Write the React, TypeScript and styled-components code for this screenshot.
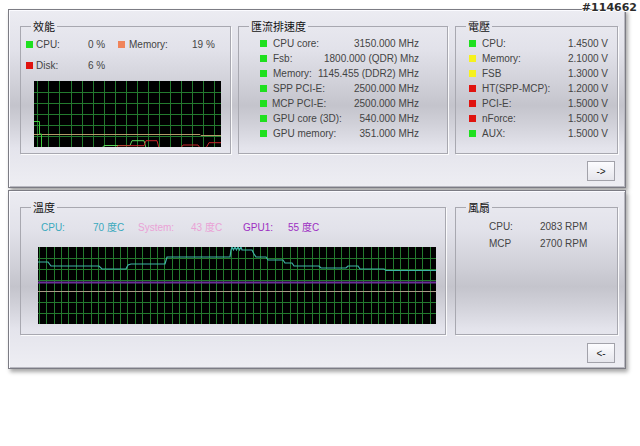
import React from "react";
import styled, { createGlobalStyle } from "styled-components";

const GlobalStyle = createGlobalStyle`
  html, body {
    margin: 0;
    padding: 0;
    background: #fff;
  }
  body {
    font-family: "Liberation Sans", Arial, sans-serif;
    font-size: 10px;
    color: #444;
  }
`;

const Page = styled.div`
  position: relative;
  width: 640px;
  height: 446px;
  padding: 9px 0 0 8px;
  box-sizing: border-box;
`;

const Watermark = styled.div`
  position: absolute;
  top: 2px;
  right: 3px;
  font: bold 11px/12px "DejaVu Sans", sans-serif;
  color: #2c2c2c;
  text-shadow: 1px 0 0 #fff, -1px 0 0 #fff, 0 1px 0 #fff, 0 -1px 0 #fff;
  z-index: 2;
`;

const Stack = styled.div`
  display: flex;
  flex-direction: column;
  gap: 2px;
  width: 618px;
`;

const Panel = styled.section`
  height: 179px;
  box-sizing: border-box;
  border: 1px solid #7c7c84;
  box-shadow: inset 1px 1px 0 #fbfbff, inset -1px -1px 0 #b8b8c0,
    2px 3px 4px rgba(0, 0, 0, 0.35);
  background: linear-gradient(
    to bottom,
    #ececf2 0%,
    #e2e2ea 22%,
    #d0d0d8 42%,
    #c4c4cc 54%,
    #d0d0d8 64%,
    #e4e4ec 78%,
    #eeeef3 100%
  );
  padding: 10px 7px 0 11px;
  display: flex;
  flex-direction: column;
`;

const BoxRow = styled.div<{ $gap: number; $h: number }>`
  display: flex;
  gap: ${(p) => p.$gap}px;
  height: ${(p) => p.$h}px;
`;

const Group = styled.fieldset<{ $w: number }>`
  margin: 0;
  padding: 0;
  min-width: 0;
  width: ${(p) => p.$w}px;
  box-sizing: border-box;
  border: 1px solid #a8a8b0;
  box-shadow: 1px 1px 0 rgba(255, 255, 255, 0.85);
`;

const Legend = styled.legend`
  margin-left: 10px;
  padding: 0 2px;
  font: 11px/13px "Noto Sans CJK TC", sans-serif;
  color: #111;
`;

const Content = styled.div<{ $pt: number; $pl: number; $pr?: number }>`
  padding: ${(p) => p.$pt}px ${(p) => p.$pr ?? 0}px 0 ${(p) => p.$pl}px;
`;

const StatRow = styled.div`
  display: flex;
  align-items: center;
  height: 21px;
`;

const Stat = styled.div`
  display: flex;
  align-items: center;
`;

const Swatch = styled.span<{ $c: string }>`
  display: inline-block;
  width: 7px;
  height: 7px;
  background: ${(p) => p.$c};
  flex: none;
`;

const Label = styled.span<{ $w?: number; $ml?: number }>`
  display: inline-block;
  width: ${(p) => (p.$w ? `${p.$w}px` : "auto")};
  margin-left: ${(p) => p.$ml ?? 0}px;
  white-space: nowrap;
`;

const ListRow = styled.div`
  display: flex;
  align-items: center;
  height: 15px;
  white-space: nowrap;
`;

const ListLabel = styled.span<{ $ml: number }>`
  flex: 1;
  margin-left: ${(p) => p.$ml}px;
`;

const ListValue = styled.span`
  text-align: right;
`;

const Graph = styled.svg<{ $mt: number; $ml: number }>`
  display: block;
  margin: ${(p) => p.$mt}px 0 0 ${(p) => p.$ml}px;
  background: #000;
`;

const TempRow = styled.div`
  display: grid;
  grid-template-columns: 52px 45px 53px 52px 45px auto;
  line-height: 14px;
  font-family: "Liberation Sans", "Noto Sans CJK TC", sans-serif;
`;

const TempText = styled.span<{ $c: string }>`
  color: ${(p) => p.$c};
  white-space: nowrap;
`;

const FanRow = styled.div`
  display: flex;
  align-items: center;
  height: 17px;
`;

const ButtonBar = styled.div<{ $mt: number }>`
  display: flex;
  justify-content: flex-end;
  margin-top: ${(p) => p.$mt}px;
  padding-right: 3px;
`;

const NavButton = styled.button`
  width: 28px;
  height: 20px;
  padding: 0;
  box-sizing: border-box;
  border: 1px solid #a2a2aa;
  background: linear-gradient(to bottom, #fcfcff, #e6e6ec);
  font: 10px "Liberation Sans", Arial, sans-serif;
  color: #222;
`;

type GridProps = {
  w: number;
  h: number;
  colW: number;
  x0: number;
  rowH: number;
  children?: React.ReactNode;
  mt: number;
  ml: number;
};

const GRID = "#237a2e";

const Chart = ({ w, h, colW, x0, rowH, children, mt, ml }: GridProps) => {
  const cols: number[] = [];
  for (let x = x0; x < w; x += colW) cols.push(Math.round(x) + 0.5);
  const rows: number[] = [];
  for (let y = rowH; y < h; y += rowH) rows.push(Math.round(y) + 0.5);
  return (
    <Graph width={w} height={h} viewBox={`0 0 ${w} ${h}`} $mt={mt} $ml={ml}>
      {cols.map((x) => (
        <line key={`c${x}`} x1={x} x2={x} y1={0} y2={h} stroke={GRID} strokeWidth={1} />
      ))}
      {rows.map((y) => (
        <line key={`r${y}`} x1={0} x2={w} y1={y} y2={y} stroke={GRID} strokeWidth={1} />
      ))}
      {children}
    </Graph>
  );
};

const pts = (list: number[][], dx = 0, dy = 0) =>
  list.map(([x, y]) => `${x - dx},${y - dy}`).join(" ");

const cpuTemp = [
  [38, 261], [48, 261], [51, 265], [99, 265], [102, 268], [126, 268],
  [128, 264], [131, 263], [165, 263], [167, 256], [230, 256], [231, 249],
  [232, 246], [233.5, 249], [235, 246], [236.5, 249], [238, 246],
  [239.5, 249], [241, 246], [242, 249], [252, 249], [254, 253], [256, 256],
  [266, 256], [268, 259], [283, 259], [285, 262], [292, 262], [294, 265],
  [319, 265], [321, 267], [346, 267], [348, 265], [358, 265], [360, 268],
  [384, 268], [386, 269.5], [436, 269.5],
];

const busRows = [
  ["CPU core:", "3150.000 MHz"],
  ["Fsb:", "1800.000 (QDR) Mhz"],
  ["Memory:", "1145.455 (DDR2) MHz"],
  ["SPP PCI-E:", "2500.000 MHz"],
  ["MCP PCI-E:", "2500.000 MHz"],
  ["GPU core (3D):", "540.000 MHz"],
  ["GPU memory:", "351.000 MHz"],
];

const GREEN = "#1fe01f";
const YELLOW = "#f6f21e";
const RED = "#e0130f";

const voltRows: [string, string, string][] = [
  ["CPU:", "1.4500 V", GREEN],
  ["Memory:", "2.1000 V", YELLOW],
  ["FSB", "1.3000 V", YELLOW],
  ["HT(SPP-MCP):", "1.2000 V", RED],
  ["PCI-E:", "1.5000 V", RED],
  ["nForce:", "1.5000 V", RED],
  ["AUX:", "1.5000 V", GREEN],
];

export default function App() {
  return (
    <Page>
      <GlobalStyle />
      <Watermark>#114662</Watermark>
      <Stack>
        <Panel>
          <BoxRow $gap={7} $h={134}>
            <Group $w={211}>
              <Legend>效能</Legend>
              <Content $pt={1} $pl={5}>
                <StatRow>
                  <Stat>
                    <Swatch $c={GREEN} />
                    <Label $w={52} $ml={3}>CPU:</Label>
                    <Label $w={30}>0 %</Label>
                  </Stat>
                  <Stat>
                    <Swatch $c="#f0845a" />
                    <Label $w={63} $ml={4}>Memory:</Label>
                    <Label>19 %</Label>
                  </Stat>
                </StatRow>
                <StatRow>
                  <Stat>
                    <Swatch $c={RED} />
                    <Label $w={52} $ml={3}>Disk:</Label>
                    <Label>6 %</Label>
                  </Stat>
                </StatRow>
              </Content>
              <Chart w={187} h={66} colW={11.07} x0={3.3} rowH={11} mt={5} ml={13}>
                <polyline
                  points={pts([[0, 53.5], [166, 53.5], [167, 54.5], [187, 54.5]])}
                  fill="none"
                  stroke="#b39c68"
                  strokeWidth={1}
                />
                <polyline
                  points={pts([[0, 40.5], [5.5, 40.5], [5.5, 53], [7.5, 53], [7.5, 67]])}
                  fill="none"
                  stroke="#3cc83c"
                  strokeWidth={1}
                />
                <polyline
                  points={pts([[68, 67], [70, 64.5], [96, 64.5], [98, 59.7], [110, 59.7], [112, 67]])}
                  fill="none"
                  stroke="#5ad45a"
                  strokeWidth={1}
                />
                <polyline
                  points={pts([[82, 67], [84, 64.7], [110, 64.7], [112, 59.7], [123, 59.7], [125, 67]])}
                  fill="none"
                  stroke="#c8262a"
                  strokeWidth={1}
                />
                <polyline
                  points={pts([[147, 67], [149, 64], [164, 64], [166, 67]])}
                  fill="none"
                  stroke="#c8262a"
                  strokeWidth={1}
                />
                <polyline
                  points={pts([[172, 67], [175, 61.7], [187, 61.7]])}
                  fill="none"
                  stroke="#c8262a"
                  strokeWidth={1}
                />
              </Chart>
            </Group>
            <Group $w={210}>
              <Legend>匯流排速度</Legend>
              <Content $pt={3} $pl={21} $pr={28}>
                {busRows.map(([l, v], i) => (
                  <ListRow key={l}>
                    <Swatch $c={GREEN} />
                    <ListLabel $ml={i === 4 ? 5 : 6}>{l}</ListLabel>
                    <ListValue>{v}</ListValue>
                  </ListRow>
                ))}
              </Content>
            </Group>
            <Group $w={163}>
              <Legend>電壓</Legend>
              <Content $pt={3} $pl={13} $pr={9}>
                {voltRows.map(([l, v, c]) => (
                  <ListRow key={l}>
                    <Swatch $c={c} />
                    <ListLabel $ml={6}>{l}</ListLabel>
                    <ListValue>{v}</ListValue>
                  </ListRow>
                ))}
              </Content>
            </Group>
          </BoxRow>
          <ButtonBar $mt={7}>
            <NavButton>-&gt;</NavButton>
          </ButtonBar>
        </Panel>

        <Panel>
          <BoxRow $gap={9} $h={134}>
            <Group $w={426}>
              <Legend>溫度</Legend>
              <Content $pt={7} $pl={20}>
                <TempRow>
                  <TempText $c="#3aa9bd">CPU:</TempText>
                  <TempText $c="#3aa9bd">70 度C</TempText>
                  <TempText $c="#eaa2d6">System:</TempText>
                  <TempText $c="#eaa2d6">43 度C</TempText>
                  <TempText $c="#9d2fc2">GPU1:</TempText>
                  <TempText $c="#9d2fc2">55 度C</TempText>
                </TempRow>
              </Content>
              <Chart w={398} h={77} colW={7.37} x0={1} rowH={11} mt={12} ml={17}>
                <line x1={0} x2={398} y1={35.5} y2={35.5} stroke="#6a2f98" strokeWidth={2} />
                <line x1={0} x2={398} y1={44.5} y2={44.5} stroke="#a89c86" strokeWidth={1} />
                <polyline
                  points={pts(cpuTemp, 38, 246)}
                  fill="none"
                  stroke="#3fb3a6"
                  strokeWidth={1.2}
                />
              </Chart>
            </Group>
            <Group $w={163}>
              <Legend>風扇</Legend>
              <Content $pt={4} $pl={33}>
                <FanRow>
                  <Label $w={51}>CPU:</Label>
                  <Label>2083 RPM</Label>
                </FanRow>
                <FanRow>
                  <Label $w={51}>MCP</Label>
                  <Label>2700 RPM</Label>
                </FanRow>
              </Content>
            </Group>
          </BoxRow>
          <ButtonBar $mt={8}>
            <NavButton>&lt;-</NavButton>
          </ButtonBar>
        </Panel>
      </Stack>
    </Page>
  );
}
